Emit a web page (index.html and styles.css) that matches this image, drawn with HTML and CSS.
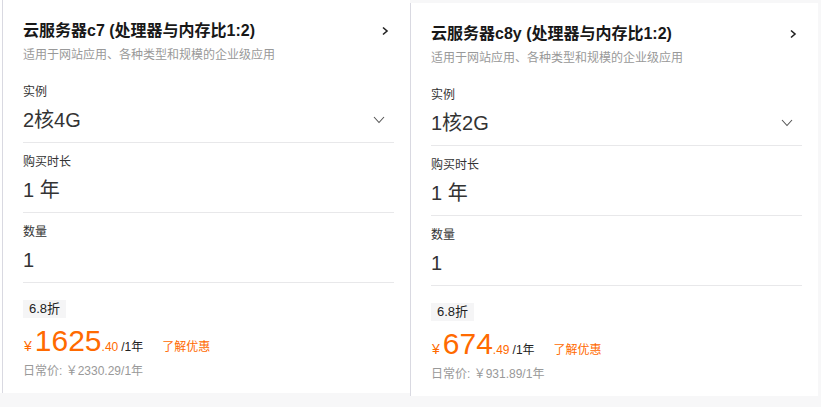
FILE: index.html
```html
<!DOCTYPE html>
<html>
<head>
    <meta charset="utf-8">
    <title>云服务器</title>
    <link rel="stylesheet" href="styles.css">
</head>
<body>
    <div class="cards">
        <div class="card">
            <div class="card-head">
                <div class="card-title">云服务器c7 (处理器与内存比1:2)</div>
                <svg class="arrow-right" width="12" height="12" viewBox="0 0 12 12"><polyline points="4,2.5 8,6 4,9.5" fill="none" stroke="#222" stroke-width="1.6"/></svg>
            </div>
            <div class="card-desc">适用于网站应用、各种类型和规模的企业级应用</div>

            <div class="row">
                <div class="row-label">实例</div>
                <div class="row-value select">
                    <span>2核4G</span>
                    <svg class="arrow-down" width="12" height="8" viewBox="0 0 12 8"><polyline points="1,1 6,6.5 11,1" fill="none" stroke="#555" stroke-width="1.1"/></svg>
                </div>
            </div>
            <div class="row">
                <div class="row-label">购买时长</div>
                <div class="row-value">1 年</div>
            </div>
            <div class="row">
                <div class="row-label">数量</div>
                <div class="row-value">1</div>
            </div>

            <div class="price-box">
                <span class="discount">6.8折</span>
                <div class="price">
                    <span class="yen">¥</span><span class="num">1625</span><span class="dec">.40</span><span class="unit">/1年</span>
                    <a class="promo" href="#">了解优惠</a>
                </div>
                <div class="orig">日常价: ￥2330.29/1年</div>
            </div>
        </div>

        <div class="card shifted">
            <div class="card-head">
                <div class="card-title">云服务器c8y (处理器与内存比1:2)</div>
                <svg class="arrow-right" width="12" height="12" viewBox="0 0 12 12"><polyline points="4,2.5 8,6 4,9.5" fill="none" stroke="#222" stroke-width="1.6"/></svg>
            </div>
            <div class="card-desc">适用于网站应用、各种类型和规模的企业级应用</div>

            <div class="row">
                <div class="row-label">实例</div>
                <div class="row-value select">
                    <span>1核2G</span>
                    <svg class="arrow-down" width="12" height="8" viewBox="0 0 12 8"><polyline points="1,1 6,6.5 11,1" fill="none" stroke="#555" stroke-width="1.1"/></svg>
                </div>
            </div>
            <div class="row">
                <div class="row-label">购买时长</div>
                <div class="row-value">1 年</div>
            </div>
            <div class="row">
                <div class="row-label">数量</div>
                <div class="row-value">1</div>
            </div>

            <div class="price-box">
                <span class="discount">6.8折</span>
                <div class="price">
                    <span class="yen">¥</span><span class="num">674</span><span class="dec">.49</span><span class="unit">/1年</span>
                    <a class="promo" href="#">了解优惠</a>
                </div>
                <div class="orig">日常价: ￥931.89/1年</div>
            </div>
        </div>
    </div>
</body>
</html>
```

FILE: styles.css
```css
* {
    margin: 0;
    padding: 0;
    box-sizing: border-box;
}
body {
    background: #f7f7f8;
    font-family: "Liberation Sans", "Noto Sans CJK SC", sans-serif;
    color: #333;
    overflow: hidden;
}
.cards {
    display: flex;
    align-items: flex-start;
    padding-left: 2px;
    background: linear-gradient(#fff, #fff) no-repeat 0 0 / 2px 393px;
}
.card {
    width: 408px;
    flex-shrink: 0;
    background: #fff;
    border-left: 1px solid #d9d9e1;
    padding: 20px 16px 13px 20px;
}
.card.shifted {
    margin-top: 3px;
}
.card-head {
    display: flex;
    justify-content: space-between;
    align-items: center;
    height: 22px;
}
.card-title {
    font-size: 16px;
    font-weight: bold;
    line-height: 22px;
    color: #181818;
}
.arrow-right {
    margin-right: 3px;
}
.card-desc {
    margin-top: 4px;
    font-size: 12px;
    line-height: 18px;
    color: #999;
    margin-bottom: 9px;
}
.row {
    padding: 10px 0 8px;
    border-bottom: 1px solid #e8e8ea;
}
.row-label {
    font-size: 12px;
    line-height: 18px;
    color: #333;
}
.row-value {
    margin-top: 5px;
    font-size: 20px;
    line-height: 28px;
    color: #333;
}
.row-value.select {
    display: flex;
    justify-content: space-between;
    align-items: center;
}
.arrow-down {
    margin-right: 9px;
}
.price-box {
    padding-top: 17px;
}
.discount {
    display: block;
    width: max-content;
    height: 18px;
    line-height: 18px;
    padding: 0 6px;
    font-size: 13px;
    background: #f5f5f6;
    color: #222;
}
.price {
    display: flex;
    align-items: baseline;
    height: 36px;
    margin-top: 8px;
    padding-left: 1px;
    line-height: 1;
    color: #ff6a00;
    white-space: nowrap;
}
.yen {
    font-size: 14px;
    margin-right: 3px;
}
.num {
    font-size: 30px;
}
.dec {
    font-size: 12px;
}
.unit {
    margin-left: 3px;
    font-size: 12px;
    color: #222;
}
.promo {
    margin-left: 19px;
    font-size: 12px;
    color: #ff6a00;
    text-decoration: none;
}
.orig {
    font-size: 12px;
    line-height: 18px;
    color: #999;
}
```
